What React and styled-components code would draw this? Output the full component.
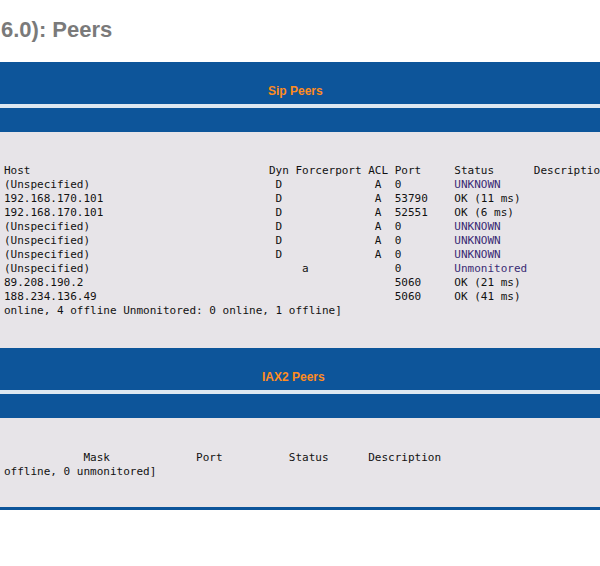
import styled, { createGlobalStyle } from 'styled-components';

const GlobalStyle = createGlobalStyle`
  body {
    margin: 0;
    background: #ffffff;
  }
`;

// sip peers, same columns as the asterisk cli output (name column scrolled off)
const sipPeers = [
  { host: '(Unspecified)', dyn: ' D ', force: '', acl: ' A ', port: '0', status: 'UNKNOWN' },
  { host: '192.168.170.101', dyn: ' D ', force: '', acl: ' A ', port: '53790', status: 'OK (11 ms)' },
  { host: '192.168.170.101', dyn: ' D ', force: '', acl: ' A ', port: '52551', status: 'OK (6 ms)' },
  { host: '(Unspecified)', dyn: ' D ', force: '', acl: ' A ', port: '0', status: 'UNKNOWN' },
  { host: '(Unspecified)', dyn: ' D ', force: '', acl: ' A ', port: '0', status: 'UNKNOWN' },
  { host: '(Unspecified)', dyn: ' D ', force: '', acl: ' A ', port: '0', status: 'UNKNOWN' },
  { host: '(Unspecified)', dyn: '   ', force: ' a ', acl: '   ', port: '0', status: 'Unmonitored' },
  { host: '89.208.190.2', dyn: '   ', force: '', acl: '   ', port: '5060', status: 'OK (21 ms)' },
  { host: '188.234.136.49', dyn: '   ', force: '', acl: '   ', port: '5060', status: 'OK (41 ms)' },
];

const lead = (p) =>
  p.host.padEnd(39) + ' ' + p.dyn + ' ' + p.force.padEnd(10) + ' ' + p.acl + ' ' + p.port.padEnd(8) + ' ';

const sipHeader =
  'Host'.padEnd(39) + ' Dyn Forcerport ACL ' + 'Port'.padEnd(8) + ' ' + 'Status'.padEnd(11) + ' Description';

const iaxHeader =
  ' '.repeat(12) + 'Mask'.padEnd(17) + 'Port'.padEnd(14) + 'Status'.padEnd(12) + 'Description';

const App = () => {
  return (
    <Page>
      <GlobalStyle />
      <Title>6.0): Peers</Title>

      <Section>
        <HeaderBar $indent={268}>Sip Peers</HeaderBar>
        <Divider />
        <SubBar />
        <Body $top={32} $bottom={30}>
          <Output>
            <Line>{sipHeader}</Line>
            {sipPeers.map((p, i) => (
              <Line key={i}>
                {lead(p)}
                <Status $muted={p.status === 'UNKNOWN' || p.status === 'Unmonitored'}>{p.status}</Status>
              </Line>
            ))}
            <Line>online, 4 offline Unmonitored: 0 online, 1 offline]</Line>
          </Output>
        </Body>
      </Section>

      <Section $closed>
        <HeaderBar $indent={262}>IAX2 Peers</HeaderBar>
        <Divider />
        <SubBar />
        <Body $top={33} $bottom={28}>
          <Output>
            <Line>{iaxHeader}</Line>
            <Line>offline, 0 unmonitored]</Line>
          </Output>
        </Body>
      </Section>
    </Page>
  );
};

export default App;

const Page = styled.div`
  width: 600px;
  overflow: hidden;
  font-family: 'Liberation Sans', Arial, sans-serif;
`;

const Title = styled.h1`
  margin: 17px 0 20px 0;
  padding-left: 1px;
  font-size: 22px;
  line-height: 25px;
  font-weight: bold;
  color: #7a7a7a;
  white-space: nowrap;
`;

const Section = styled.div`
  display: flex;
  flex-direction: column;
  border-bottom: ${(p) => (p.$closed ? '3px solid #0d559a' : 'none')};
`;

const HeaderBar = styled.div`
  height: 42px;
  box-sizing: border-box;
  padding: 22px 0 0 ${(p) => p.$indent}px;
  background: #0d559a;
  color: #ff8c1e;
  font-size: 12px;
  line-height: 14px;
  font-weight: bold;
`;

const Divider = styled.div`
  height: 4px;
  background: #dde8f1;
`;

const SubBar = styled.div`
  height: 24px;
  background: #0d559a;
`;

const Body = styled.div`
  background: #e7e4e8;
  padding: ${(p) => p.$top}px 0 ${(p) => p.$bottom}px 4px;
`;

const Output = styled.pre`
  margin: 0;
  font-family: 'DejaVu Sans Mono', 'Liberation Mono', monospace;
  font-size: 11px;
  line-height: 14px;
  color: #111111;
  white-space: pre;
`;

const Line = styled.div`
  height: 14px;
`;

const Status = styled.span`
  color: ${(p) => (p.$muted ? '#3a2b74' : '#111111')};
`;
